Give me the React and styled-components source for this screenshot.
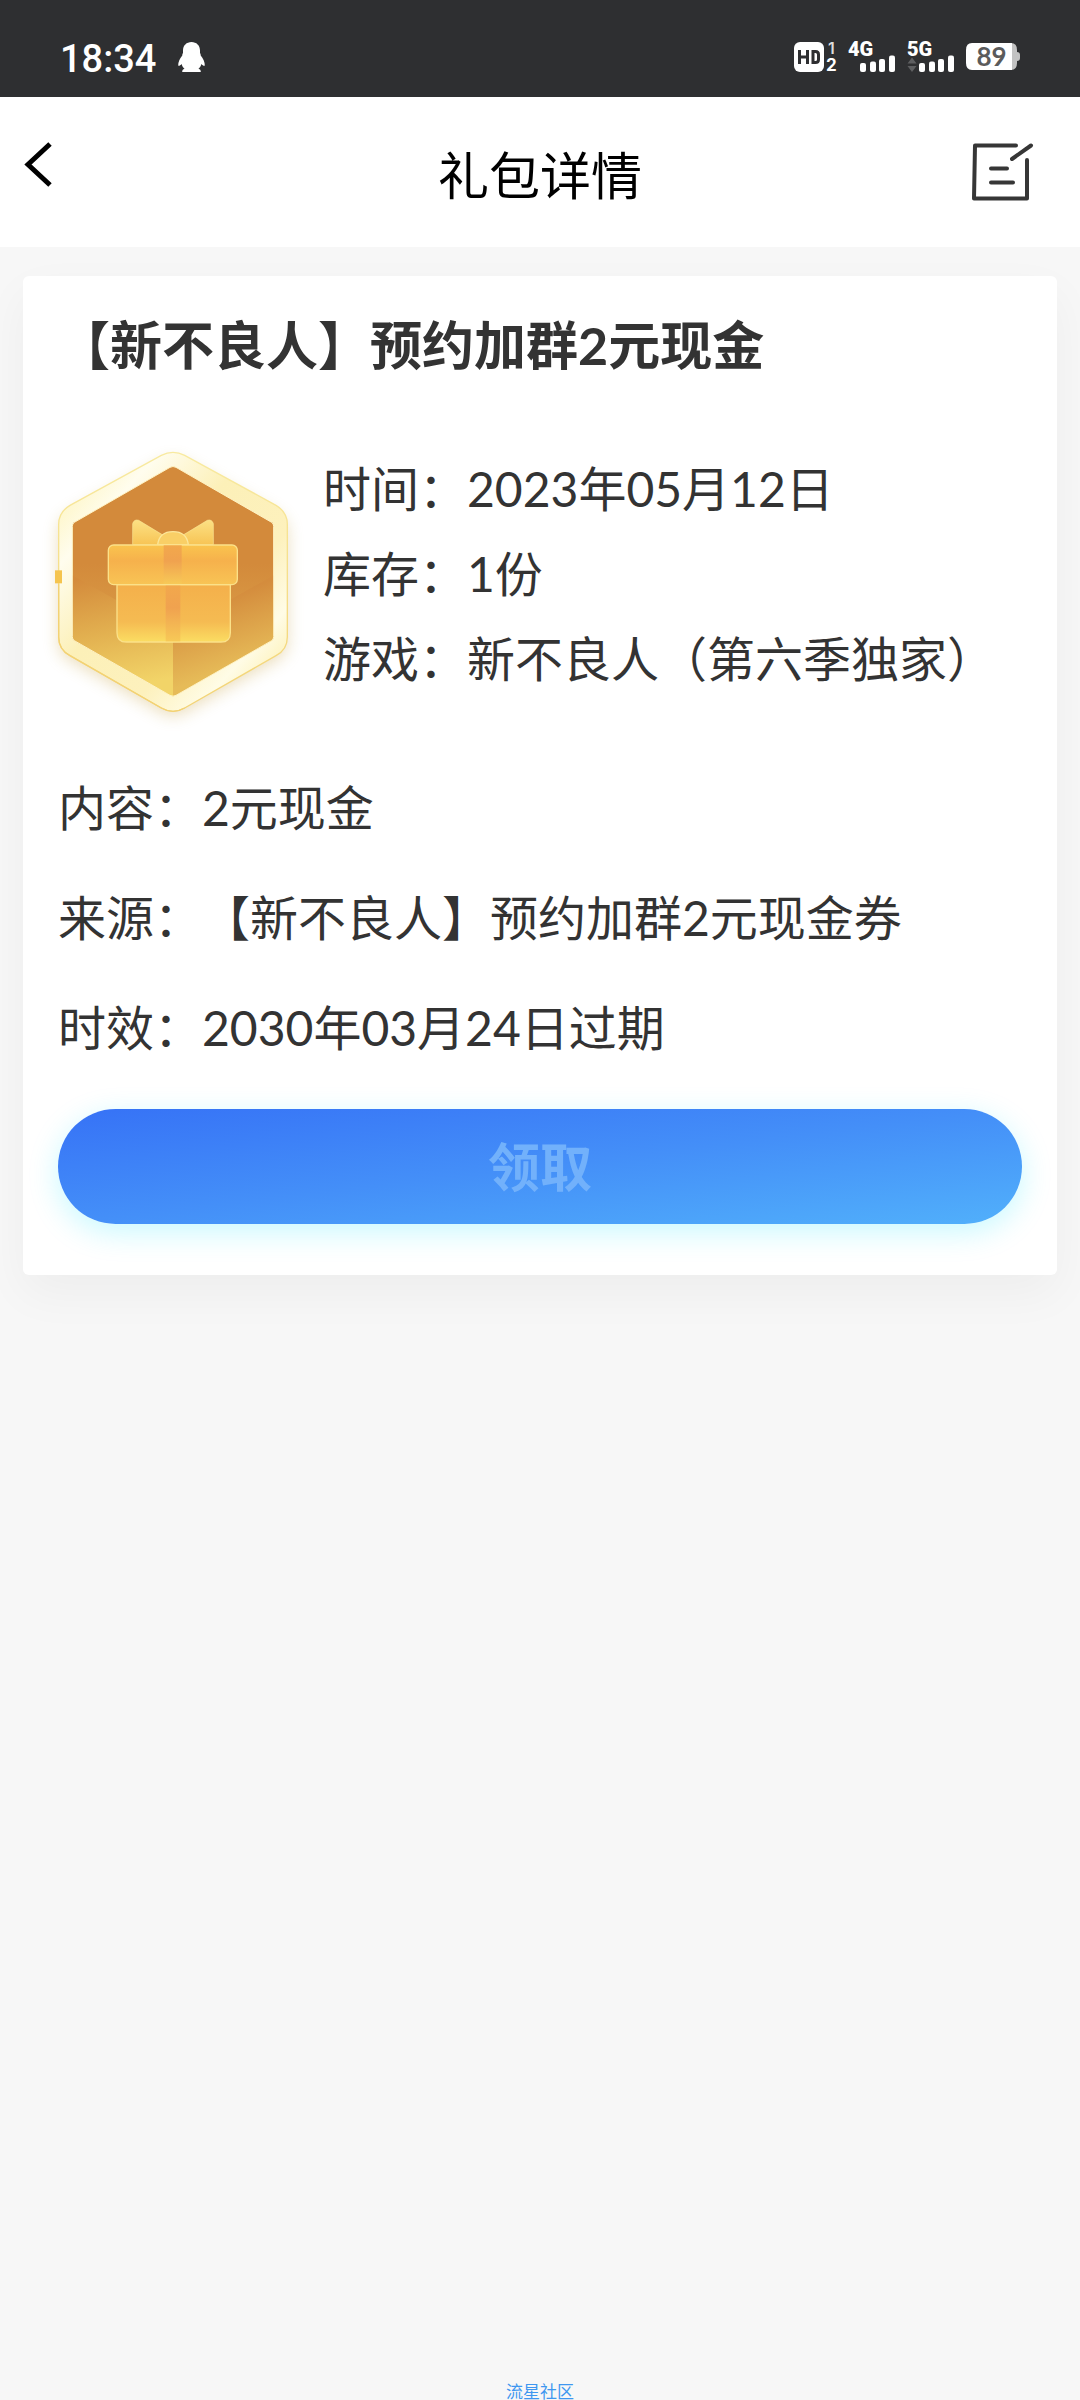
import React from "react";
import styled, { createGlobalStyle } from "styled-components";

const GlobalStyle = createGlobalStyle`
  *, *::before, *::after { box-sizing: border-box; }
  html, body { margin: 0; padding: 0; background: #f7f7f7; }
  body {
    font-family: Lato, "Noto Sans CJK SC", sans-serif;
    color: #333;
  }
`;

const Page = styled.div`
  min-height: 100vh;
  display: flex;
  flex-direction: column;
  background: #f7f7f7;
`;

const StatusBar = styled.div`
  height: 97px;
  padding: 16px 60px 0;
  display: flex;
  align-items: center;
  justify-content: space-between;
  background: #2e2f31;
  color: #fff;
`;

const StatusGroup = styled.div`
  display: flex;
  align-items: center;
  gap: ${(p) => p.$gap}px;
`;

const Clock = styled.time`
  padding-top: 4px;
  font-family: Roboto, sans-serif;
  font-size: 38px;
  line-height: 40px;
  font-weight: 500;
`;

const Glyph = styled.svg`
  display: block;
  flex: none;
  overflow: visible;
`;

const NavBar = styled.header`
  height: 150px;
  padding: 0 46px 0 20px;
  display: grid;
  grid-template-columns: 1fr auto 1fr;
  align-items: center;
  background: #fff;
`;

const IconButton = styled.button`
  padding: 0;
  border: 0;
  background: none;
  cursor: pointer;
  justify-self: ${(p) => p.$side};
`;

const NavTitle = styled.h1`
  margin: 0;
  padding: 8px 0 0 26px;
  font-size: 51px;
  line-height: 64px;
  font-weight: 400;
  color: #000;
`;

const Card = styled.main`
  margin: 29px 23px 0;
  padding: 35px 35px 51px;
  border-radius: 6px;
  background: #fff;
  box-shadow: 0 18px 48px rgba(0, 0, 0, 0.045);
`;

const CardTitle = styled.h2`
  margin: 0;
  font-size: 52px;
  line-height: 68px;
  font-weight: 700;
`;

const Summary = styled.section`
  margin-top: 67px;
  display: flex;
  align-items: flex-start;
  gap: 35px;
`;

const Badge = styled.div`
  padding-top: 6px;
  flex: none;
`;

const FieldList = styled.dl`
  margin: ${(p) => p.$top}px 0 0;
  font-size: 48px;
  line-height: ${(p) => p.$line}px;
`;

const FieldRow = styled.div`
  display: flex;
`;

const Label = styled.dt`
  flex: none;
`;

const Value = styled.dd`
  margin: 0;
`;

const ClaimButton = styled.button`
  display: block;
  width: 100%;
  height: 115px;
  margin-top: 26px;
  padding: 0;
  border: 0;
  border-radius: 58px;
  background: linear-gradient(to bottom right, #3672f6 0%, #448ff8 50%, #51b0fb 100%);
  box-shadow: 0 8px 30px rgba(0, 229, 255, 0.22);
  font-family: inherit;
  font-size: 52px;
  line-height: 68px;
  font-weight: 700;
  color: #72b1fb;
`;

const Footer = styled.footer`
  margin-top: auto;
  text-align: center;
  font-size: 17px;
  line-height: 16px;
`;

const FooterLink = styled.a`
  color: #3f97f0;
  text-decoration: none;
`;

const Penguin = () => (
  <Glyph width="27" height="30" viewBox="0 0 27 30" fill="#fff" aria-hidden="true">
    <path d="M13.5 0C8.500 0 5 3.500 5 8.500V11C4.600 11.700 4.200 12.400 4.300 13.500C2 16.500 0 20 .2 23.500C.8 24.500 2.500 23.200 3.600 22C4.200 24 5 25.500 6.500 26.800C5 27.200 4.200 28 4.200 30H22.800C22.800 28 22 27.200 20.500 26.800C22 25.500 22.800 24 23.400 22C24.500 23.200 26.200 24.500 26.800 23.500C27 20 25 16.500 22.700 13.500C22.800 12.400 22.400 11.700 22 11V8.500C22 3.500 18.500 0 13.500 0Z" />
  </Glyph>
);

const HdIcon = () => (
  <Glyph width="42" height="30" viewBox="0 0 42 30" aria-hidden="true" fontFamily="Inter, sans-serif" fontWeight="700">
    <rect width="30" height="30" rx="6" fill="#fff" />
    <path d="M5.500 8V22M13.500 8V22M5.500 15H13.500M19 9.500V20.500H21.500Q24.500 20.500 24.500 17.500V12.500Q24.500 9.500 21.500 9.500Z" fill="none" stroke="#2e2f31" strokeWidth="3" />
    <text x="34" y="12" fontSize="16" fontWeight="600" fill="#ddd">1</text>
    <text x="32" y="29" fontSize="17" fill="#fff">2</text>
  </Glyph>
);

const Signal = ({ label, arrows }) => (
  <Glyph width="47" height="30" viewBox="0 0 47 30" fill="#fff" aria-hidden="true">
    <text x="0" y="14" fontFamily="Roboto, sans-serif" fontSize="20" fontWeight="900">{label}</text>
    {arrows && <path d="M0.500 21.500L5 15.500L9.500 21.500ZM0.500 24L5 30L9.500 24Z" fill="#5e5f61" />}
    <rect x="12" y="21" width="6" height="9" rx="2" />
    <rect x="22" y="19.500" width="6" height="10.500" rx="2" />
    <rect x="31" y="17" width="6" height="13" rx="2" />
    <rect x="41" y="13.500" width="6" height="16.500" rx="2" />
  </Glyph>
);

const Battery = () => (
  <Glyph width="54" height="27" viewBox="0 0 54 27" aria-hidden="true">
    <path d="M45 0Q51 0 51 7V9Q54 9 54 12V15Q54 18 51 18V20Q51 27 45 27Z" fill="#c2c2c2" />
    <path d="M6 0H46V27H6Q0 27 0 20V7Q0 0 6 0Z" fill="#fff" />
    <text x="25.500" y="23" textAnchor="middle" fontFamily="Lato, sans-serif" fontSize="26" fontWeight="700" fill="#5b5b5b">89</text>
  </Glyph>
);

const BackIcon = () => (
  <Glyph width="36" height="64" viewBox="0 0 36 64" fill="none" stroke="#000" strokeWidth="5" aria-hidden="true">
    <path d="M30 4L8 24.500L30 45" />
  </Glyph>
);

const EditIcon = () => (
  <Glyph width="62" height="58" viewBox="0 0 62 58" fill="none" stroke="#363636" strokeWidth="4" strokeLinecap="round" strokeLinejoin="round" aria-hidden="true">
    <path d="M44 2.500H3L2 55.500H55V17M40 16L59 2.500M19 25.500H35M19 39.500H41" />
  </Glyph>
);

const GiftIcon = () => (
  <Glyph width="230" height="260" viewBox="84 95 690 780" aria-hidden="true">
    <defs>
      <linearGradient id="rim" x1="0" y1="0" x2="1" y2="1">
        <stop offset="0" stopColor="#fdf0a8" />
        <stop offset="0.22" stopColor="#fffdee" />
        <stop offset="0.42" stopColor="#fcf0b8" />
        <stop offset="0.65" stopColor="#fdf1bd" />
        <stop offset="0.8" stopColor="#fffce6" />
        <stop offset="1" stopColor="#fbe890" />
      </linearGradient>
      <linearGradient id="rimEdge" x1="0" y1="0" x2="0" y2="1">
        <stop offset="0" stopColor="#f8eaa0" />
        <stop offset="1" stopColor="#f3d374" />
      </linearGradient>
      <linearGradient id="leftFace" gradientUnits="userSpaceOnUse" x1="270" y1="450" x2="340" y2="790">
        <stop offset="0" stopColor="#d48b3c" />
        <stop offset="0.5" stopColor="#e2b050" />
        <stop offset="1" stopColor="#f2d468" />
      </linearGradient>
      <linearGradient id="rightFace" gradientUnits="userSpaceOnUse" x1="550" y1="540" x2="620" y2="740">
        <stop offset="0" stopColor="#d48c3d" />
        <stop offset="1" stopColor="#e6bb58" />
      </linearGradient>
      <linearGradient id="topFade" gradientUnits="userSpaceOnUse" x1="0" y1="430" x2="0" y2="660">
        <stop offset="0" stopColor="#d38a3b" />
        <stop offset="1" stopColor="#dca048" />
      </linearGradient>
      <linearGradient id="lid" x1="0" y1="0" x2="0" y2="1">
        <stop offset="0" stopColor="#fac44e" />
        <stop offset="0.4" stopColor="#f6b14c" />
        <stop offset="1" stopColor="#f8c455" />
      </linearGradient>
      <linearGradient id="box" x1="0" y1="0" x2="0" y2="1">
        <stop offset="0" stopColor="#f4b04b" />
        <stop offset="0.65" stopColor="#f5bb52" />
        <stop offset="1" stopColor="#fbdd62" />
      </linearGradient>
      <linearGradient id="ribbon" x1="0" y1="0" x2="0" y2="1">
        <stop offset="0" stopColor="#f2a84c" />
        <stop offset="0.4" stopColor="#f0a24f" />
        <stop offset="1" stopColor="#f7c957" />
      </linearGradient>
      <linearGradient id="bow" x1="0" y1="0" x2="0" y2="1">
        <stop offset="0" stopColor="#fce184" />
        <stop offset="1" stopColor="#f7c455" />
      </linearGradient>
      <filter id="glow" x="-20%" y="-20%" width="140%" height="140%">
        <feGaussianBlur stdDeviation="24" />
      </filter>
    </defs>
    <path d="M394 116Q429 96 464 116L738 268Q772 288 772 326V650Q772 688 738 706L464 862Q429 882 394 862L120 706Q86 688 86 650V326Q86 288 120 268Z" transform="translate(0 14)" fill="#c9a548" opacity="0.36" filter="url(#glow)" />
    <path d="M394 105Q429 87 464 105L738 255Q772 275 772 312V650Q772 688 738 706L464 863Q429 883 394 863L120 706Q86 688 86 650V312Q86 275 120 255Z" fill="url(#rim)" stroke="url(#rimEdge)" strokeWidth="4" />
    <path d="M86 490V650Q86 688 120 706L394 863Q429 883 464 863" fill="none" stroke="#f3d274" strokeWidth="4" />
    <path d="M420 141Q429 136 438 141L725 306Q731 310 731 318V649Q731 657 725 661L438 825Q429 830 420 825L133 661Q127 657 127 649V318Q127 310 133 306Z" fill="url(#topFade)" />
    <path d="M127 465L429 635V828Q424 828 420 825L133 661Q127 657 127 649Z" fill="url(#leftFace)" />
    <path d="M731 465L429 635V828Q434 828 438 825L725 661Q731 657 731 649Z" fill="url(#rightFace)" />
    <path d="M420 141Q429 136 438 141L725 306Q731 310 731 318V649Q731 657 725 661L438 825Q429 830 420 825L133 661Q127 657 127 649V318Q127 310 133 306Z" fill="none" stroke="#fff4c6" strokeWidth="3" />
    <rect x="75" y="450" width="21" height="39" fill="#f5c44e" />
    <path d="M308 373V310Q312 296 326 300L400 345L429 373ZM550 373V310Q546 296 532 300L458 345L429 373Z" fill="url(#bow)" stroke="#fbe592" strokeWidth="2" />
    <path d="M383 373Q388 334 429 334Q470 334 475 373Z" fill="#f9cf66" stroke="#fce79a" strokeWidth="4" />
    <path d="M261 493H601V637Q601 665 573 665H289Q261 665 261 637Z" fill="url(#box)" stroke="#fbe189" strokeWidth="4" />
    <rect x="407" y="495" width="44" height="168" fill="url(#ribbon)" />
    <rect x="235" y="374" width="387" height="119" rx="16" fill="url(#lid)" stroke="#fbe189" strokeWidth="4" />
    <rect x="401" y="375" width="54" height="116" fill="url(#ribbon)" />
  </Glyph>
);

const summaryFields = [
  ["时间：", "2023年05月12日"],
  ["库存：", "1份"],
  ["游戏：", "新不良人（第六季独家）"],
];

const detailFields = [
  ["内容：", "2元现金"],
  ["来源：", "【新不良人】预约加群2元现金券"],
  ["时效：", "2030年03月24日过期"],
];

const Fields = ({ items, line, top = 0 }) => (
  <FieldList $line={line} $top={top}>
    {items.map(([label, value]) => (
      <FieldRow key={label}>
        <Label>{label}</Label>
        <Value>{value}</Value>
      </FieldRow>
    ))}
  </FieldList>
);

export default function App() {
  return (
    <Page lang="zh-CN">
      <GlobalStyle />
      <StatusBar>
        <StatusGroup $gap={22}>
          <Clock>18:34</Clock>
          <Penguin />
        </StatusGroup>
        <StatusGroup $gap={12}>
          <HdIcon />
          <Signal label="4G" />
          <Signal label="5G" arrows />
          <Battery />
        </StatusGroup>
      </StatusBar>
      <NavBar>
        <IconButton type="button" $side="start" aria-label="返回">
          <BackIcon />
        </IconButton>
        <NavTitle>礼包详情</NavTitle>
        <IconButton type="button" $side="end" aria-label="编辑">
          <EditIcon />
        </IconButton>
      </NavBar>
      <Card>
        <CardTitle>【新不良人】预约加群2元现金</CardTitle>
        <Summary>
          <Badge>
            <GiftIcon />
          </Badge>
          <Fields items={summaryFields} line={85} />
        </Summary>
        <Fields items={detailFields} line={110} top={41} />
        <ClaimButton type="button">领取</ClaimButton>
      </Card>
      <Footer>
        <FooterLink href="#community">流星社区</FooterLink>
      </Footer>
    </Page>
  );
}
